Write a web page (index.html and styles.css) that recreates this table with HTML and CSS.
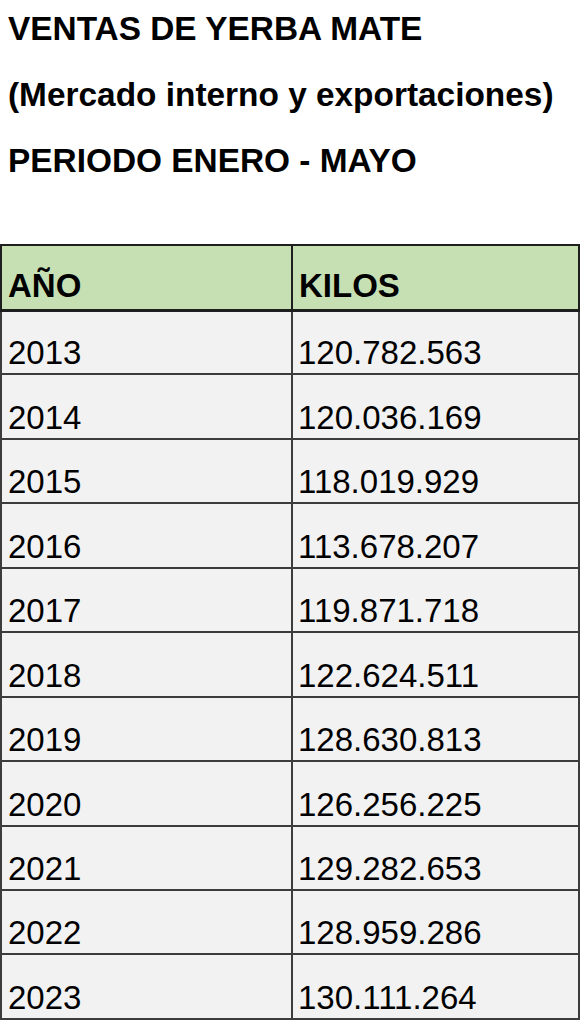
FILE: index.html
```html
<!DOCTYPE html>
<html lang="es">
<head>
<meta charset="utf-8">
<title>Ventas de yerba mate</title>
<link rel="stylesheet" href="styles.css">
</head>
<body>
<header class="titles">
  <h1 class="title">VENTAS DE YERBA MATE</h1>
  <p class="title">(Mercado interno y exportaciones)</p>
  <p class="title">PERIODO ENERO - MAYO</p>
</header>
<table class="sales">
  <thead>
    <tr class="head-row"><th class="col-year">AÑO</th><th class="col-kilos">KILOS</th></tr>
  </thead>
  <tbody>
    <tr><td>2013</td><td>120.782.563</td></tr>
    <tr><td>2014</td><td>120.036.169</td></tr>
    <tr><td>2015</td><td>118.019.929</td></tr>
    <tr><td>2016</td><td>113.678.207</td></tr>
    <tr><td>2017</td><td>119.871.718</td></tr>
    <tr><td>2018</td><td>122.624.511</td></tr>
    <tr><td>2019</td><td>128.630.813</td></tr>
    <tr><td>2020</td><td>126.256.225</td></tr>
    <tr><td>2021</td><td>129.282.653</td></tr>
    <tr><td>2022</td><td>128.959.286</td></tr>
    <tr><td>2023</td><td>130.111.264</td></tr>
  </tbody>
</table>
</body>
</html>
```
FILE: styles.css
```css
html, body {
  margin: 0;
  padding: 0;
  background: #ffffff;
}
body {
  width: 582px;
  height: 1022px;
  overflow: hidden;
  font-family: "Liberation Sans", Arial, sans-serif;
  color: #000;
}
.titles {
  display: flex;
  flex-direction: column;
  gap: 8px;
  padding-left: 8px;
}
.title {
  margin: 0;
  font-size: 33.4px;
  font-weight: bold;
  line-height: 58px;
}
.sales {
  margin-top: 54px;
  width: 580px;
  border-collapse: collapse;
  table-layout: fixed;
  font-size: 33px;
}
.sales th,
.sales td {
  box-sizing: border-box;
  border: 2px solid #3c3c3c;
  text-align: left;
  vertical-align: bottom;
  line-height: 33px;
  padding: 0 4px 4px 6px;
  white-space: nowrap;
}
.col-year { width: 291px; }
.head-row { height: 65px; }
.sales tbody tr { height: 64.45px; }
.sales th {
  background: #c6e0b4;
  font-weight: bold;
  padding-bottom: 7px;
  border-color: #1e1e1e;
  border-bottom-width: 3px;
}
.sales td {
  background: #f2f2f2;
}
.sales td:first-child { padding-left: 6px; }
.sales td:last-child { padding-left: 5px; }
```
